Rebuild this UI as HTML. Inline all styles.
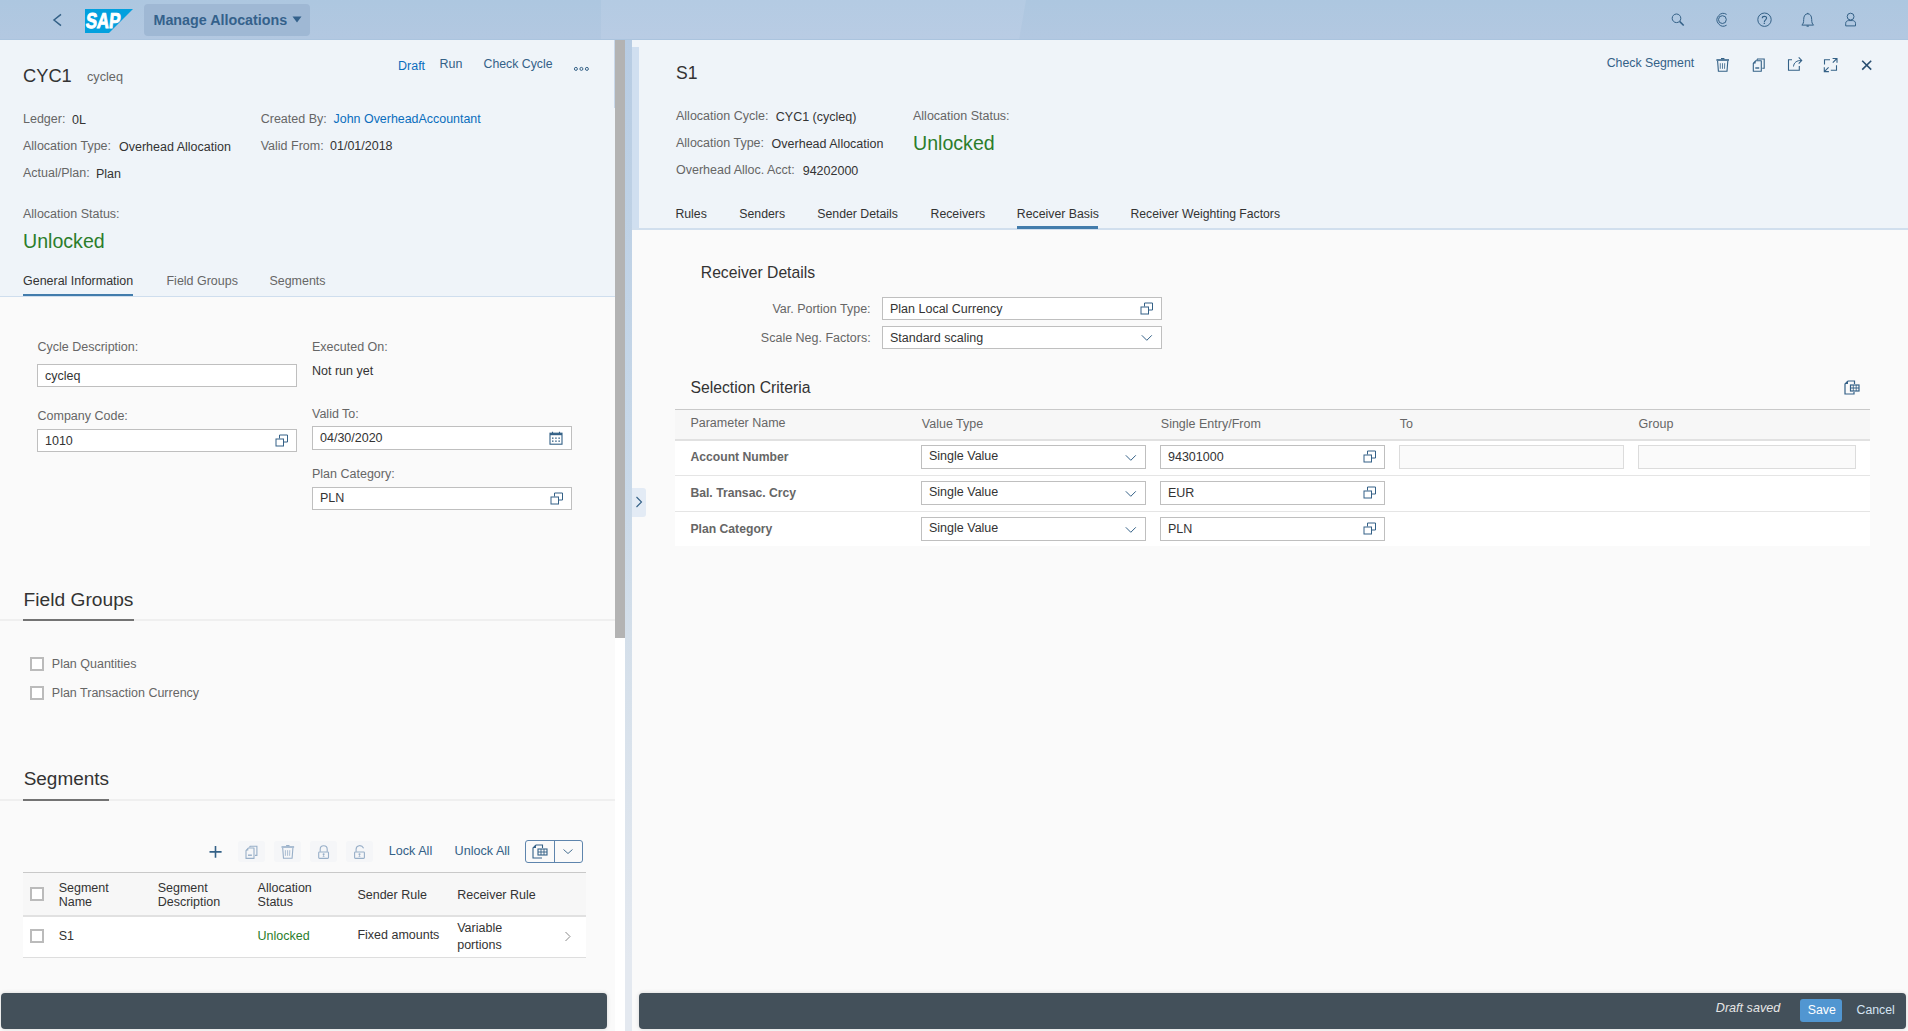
<!DOCTYPE html>
<html><head><meta charset="utf-8"><title>Manage Allocations</title>
<style>
html,body{margin:0;padding:0;}
body{width:1908px;height:1031px;overflow:hidden;position:relative;background:#fafafa;font-family:"Liberation Sans", sans-serif;}
</style></head><body>
<div style="position:absolute;left:0px;top:0px;width:1908px;height:40px;background:linear-gradient(#adc7e0,#b3c8e1);"></div>
<svg style="position:absolute;left:0;top:0" width="1908" height="40"><defs><linearGradient id="shg" x1="0" y1="0" x2="0" y2="1"><stop offset="0" stop-color="#b4cbe3"/><stop offset="1" stop-color="#b9cce4"/></linearGradient></defs><polygon points="601,0 1026,0 1019,40 601,40" fill="url(#shg)"/><rect x="0" y="39" width="1908" height="1" fill="#abc4de"/></svg>
<svg style="position:absolute;left:48px;top:10px;overflow:visible" width="18" height="20" viewBox="48 10 18 20"><path d="M61 14.4 L54 20 L61 25.6" fill="none" stroke="#346187" stroke-width="1.5"/></svg>
<svg style="position:absolute;left:85px;top:9px" width="48" height="24" viewBox="0 0 48 24"><polygon points="0,0 48,0 24,24 0,24" fill="#02a0de"/><text x="0.8" y="19.4" font-family="Liberation Sans" font-weight="bold" font-size="21.5" fill="#fff" stroke="#fff" stroke-width="0.9" textLength="34.5" lengthAdjust="spacingAndGlyphs" transform="skewX(-6) translate(1.5 0)">SAP</text></svg>
<div style="position:absolute;left:144px;top:4px;width:166px;height:32px;background:#9fb8d4;border-radius:4px;"></div>
<div style="position:absolute;left:153.5px;top:11.24px;font-size:14.3px;line-height:18px;color:#34618b;font-weight:bold;white-space:nowrap;">Manage Allocations</div>
<svg style="position:absolute;left:292px;top:16px" width="10" height="7" viewBox="0 0 10 7"><polygon points="0.5,0.5 9.5,0.5 5,6.5" fill="#34618b"/></svg>
<svg style="position:absolute;left:1665px;top:8px;overflow:visible" width="25" height="24" viewBox="1665 8 25 24"><circle cx="1676.5" cy="18.3" r="4.3" fill="none" stroke="#346187" stroke-width="1"/><path d="M1679.6 21.4 L1683.7 25.5" stroke="#346187" stroke-width="1.5"/></svg>
<svg style="position:absolute;left:1710px;top:8px;overflow:visible" width="22" height="24" viewBox="1710 8 22 24"><circle cx="1722.4" cy="19.6" r="3.9" fill="none" stroke="#346187" stroke-width="1"/><path d="M1726.6 14.4 A6.3 6.3 0 1 0 1726.6 25.2" fill="none" stroke="#346187" stroke-width="1"/></svg>
<svg style="position:absolute;left:1752px;top:8px;overflow:visible" width="26" height="24" viewBox="1752 8 26 24"><circle cx="1764.5" cy="19.7" r="6.7" fill="none" stroke="#346187" stroke-width="1"/><path d="M1762.3 18.2 C1762.3 15.8 1766.6 15.8 1766.6 18.1 C1766.6 19.8 1764.3 19.9 1764.3 22.2" fill="none" stroke="#346187" stroke-width="1.1"/><circle cx="1764.3" cy="23.4" r="0.7" fill="#346187"/></svg>
<svg style="position:absolute;left:1798px;top:8px;overflow:visible" width="20" height="24" viewBox="1798 8 20 24"><path d="M1801.8 25.1 C1803.2 24 1803.7 22.5 1803.7 19.5 C1803.7 15.8 1805.3 13.8 1807.7 13.8 C1810.1 13.8 1811.7 15.8 1811.7 19.5 C1811.7 22.5 1812.2 24 1813.6 25.1 Z" fill="none" stroke="#346187" stroke-width="1" stroke-linejoin="round"/><path d="M1806.6 26.1 L1808.8 26.1" stroke="#346187" stroke-width="1.2"/><path d="M1807 13.4 L1808.4 13.4" stroke="#346187" stroke-width="1"/></svg>
<svg style="position:absolute;left:1842px;top:8px;overflow:visible" width="18" height="24" viewBox="1842 8 18 24"><circle cx="1850.6" cy="16.6" r="3.4" fill="none" stroke="#346187" stroke-width="1"/><path d="M1845.7 25.9 L1845.7 23.3 C1845.7 21.6 1847 20.6 1848.6 20.6 L1852.6 20.6 C1854.2 20.6 1855.5 21.6 1855.5 23.3 L1855.5 25.9 Z" fill="none" stroke="#346187" stroke-width="1"/></svg>
<div style="position:absolute;left:0px;top:40px;width:615px;height:256px;background:#eff4f9;"></div>
<div style="position:absolute;left:0px;top:296px;width:615px;height:1px;background:#cfdeee;"></div>
<div style="position:absolute;left:0px;top:297px;width:615px;height:734px;background:#fafafa;"></div>
<div style="position:absolute;left:23px;top:64.16px;font-size:18.3px;line-height:23px;color:#333;font-weight:normal;white-space:nowrap;">CYC1</div>
<div style="position:absolute;left:87px;top:68.70px;font-size:12.7px;line-height:16px;color:#666;font-weight:normal;white-space:nowrap;">cycleq</div>
<div style="position:absolute;left:398px;top:57.67px;font-size:12.5px;line-height:16px;color:#0a6ebd;font-weight:normal;white-space:nowrap;">Draft</div>
<div style="position:absolute;left:439.5px;top:55.67px;font-size:12.5px;line-height:16px;color:#346187;font-weight:normal;white-space:nowrap;">Run</div>
<div style="position:absolute;left:483.5px;top:57.04px;font-size:12.3px;line-height:15px;color:#346187;font-weight:normal;white-space:nowrap;">Check Cycle</div>
<svg style="position:absolute;left:570px;top:62px;overflow:visible" width="24" height="14" viewBox="570 62 24 14"><circle cx="575.9" cy="68.9" r="1.5" fill="none" stroke="#346187" stroke-width="1"/><circle cx="581.4" cy="68.9" r="1.5" fill="none" stroke="#346187" stroke-width="1"/><circle cx="586.9" cy="68.9" r="1.5" fill="none" stroke="#346187" stroke-width="1"/></svg>
<div style="position:absolute;left:23px;top:110.67px;font-size:12.5px;line-height:16px;color:#666;font-weight:normal;white-space:nowrap;">Ledger:</div>
<div style="position:absolute;left:72px;top:111.87px;font-size:12.5px;line-height:16px;color:#333;font-weight:normal;white-space:nowrap;">0L</div>
<div style="position:absolute;left:23px;top:137.87px;font-size:12.5px;line-height:16px;color:#666;font-weight:normal;white-space:nowrap;">Allocation Type:</div>
<div style="position:absolute;left:119px;top:138.87px;font-size:12.5px;line-height:16px;color:#333;font-weight:normal;white-space:nowrap;">Overhead Allocation</div>
<div style="position:absolute;left:23px;top:164.97px;font-size:12.5px;line-height:16px;color:#666;font-weight:normal;white-space:nowrap;">Actual/Plan:</div>
<div style="position:absolute;left:96px;top:166.17px;font-size:12.5px;line-height:16px;color:#333;font-weight:normal;white-space:nowrap;">Plan</div>
<div style="position:absolute;left:260.7px;top:111.07px;font-size:12.5px;line-height:16px;color:#666;font-weight:normal;white-space:nowrap;">Created By:</div>
<div style="position:absolute;left:333.6px;top:111.09px;font-size:12.43px;line-height:16px;color:#0a6ebd;font-weight:normal;white-space:nowrap;">John OverheadAccountant</div>
<div style="position:absolute;left:260.7px;top:138.17px;font-size:12.5px;line-height:16px;color:#666;font-weight:normal;white-space:nowrap;">Valid From:</div>
<div style="position:absolute;left:330px;top:138.47px;font-size:12.5px;line-height:16px;color:#333;font-weight:normal;white-space:nowrap;">01/01/2018</div>
<div style="position:absolute;left:23px;top:205.67px;font-size:12.5px;line-height:16px;color:#666;font-weight:normal;white-space:nowrap;">Allocation Status:</div>
<div style="position:absolute;left:23px;top:229.20px;font-size:19.6px;line-height:24px;color:#2b7d2b;font-weight:normal;white-space:nowrap;">Unlocked</div>
<div style="position:absolute;left:23px;top:272.67px;font-size:12.48px;line-height:16px;color:#333;font-weight:normal;white-space:nowrap;">General Information</div>
<div style="position:absolute;left:166.5px;top:272.67px;font-size:12.48px;line-height:16px;color:#666;font-weight:normal;white-space:nowrap;">Field Groups</div>
<div style="position:absolute;left:269.4px;top:272.67px;font-size:12.48px;line-height:16px;color:#666;font-weight:normal;white-space:nowrap;">Segments</div>
<div style="position:absolute;left:23px;top:294px;width:110px;height:2px;background:#427cac;"></div>
<div style="position:absolute;left:37.5px;top:338.97px;font-size:12.5px;line-height:16px;color:#666;font-weight:normal;white-space:nowrap;">Cycle Description:</div>
<div style="position:absolute;left:37px;top:364px;width:260px;height:23px;box-sizing:border-box;background:#fff;border:1px solid #bfbfbf;"></div>
<div style="position:absolute;left:45px;top:367.67px;font-size:12.5px;line-height:16px;color:#333;font-weight:normal;white-space:nowrap;">cycleq</div>
<div style="position:absolute;left:37.5px;top:408.07px;font-size:12.5px;line-height:16px;color:#666;font-weight:normal;white-space:nowrap;">Company Code:</div>
<div style="position:absolute;left:37px;top:429px;width:260px;height:23px;box-sizing:border-box;background:#fff;border:1px solid #bfbfbf;"></div>
<div style="position:absolute;left:45px;top:432.67px;font-size:12.5px;line-height:16px;color:#333;font-weight:normal;white-space:nowrap;">1010</div>
<svg style="position:absolute;left:275px;top:434px" width="14" height="13" viewBox="0 0 14 13"><path d="M4.5 4.5 L4.5 1 L12.5 1 L12.5 8 L9 8" fill="none" stroke="#346187" stroke-width="1"/><rect x="1" y="5" width="7.5" height="7" fill="none" stroke="#346187" stroke-width="1"/></svg>
<div style="position:absolute;left:312px;top:338.87px;font-size:12.5px;line-height:16px;color:#666;font-weight:normal;white-space:nowrap;">Executed On:</div>
<div style="position:absolute;left:312px;top:363.07px;font-size:12.5px;line-height:16px;color:#333;font-weight:normal;white-space:nowrap;">Not run yet</div>
<div style="position:absolute;left:312px;top:405.67px;font-size:12.5px;line-height:16px;color:#666;font-weight:normal;white-space:nowrap;">Valid To:</div>
<div style="position:absolute;left:312px;top:426px;width:260px;height:24px;box-sizing:border-box;background:#fff;border:1px solid #bfbfbf;"></div>
<div style="position:absolute;left:320px;top:429.67px;font-size:12.5px;line-height:16px;color:#333;font-weight:normal;white-space:nowrap;">04/30/2020</div>
<svg style="position:absolute;left:549px;top:431px" width="14" height="14" viewBox="0 0 14 14"><rect x="1" y="2.2" width="12" height="11" fill="none" stroke="#346187" stroke-width="1.1"/><rect x="1" y="2.2" width="12" height="2" fill="#346187"/><path d="M3.5 0.8 L3.5 3 M10.5 0.8 L10.5 3" stroke="#346187" stroke-width="1.1"/><g fill="#346187"><rect x="3" y="6.5" width="1.5" height="1.3"/><rect x="6.2" y="6.5" width="1.5" height="1.3"/><rect x="9.4" y="6.5" width="1.5" height="1.3"/><rect x="3" y="9.5" width="1.5" height="1.3"/><rect x="6.2" y="9.5" width="1.5" height="1.3"/><rect x="9.4" y="9.5" width="1.5" height="1.3"/></g></svg>
<div style="position:absolute;left:312px;top:465.67px;font-size:12.5px;line-height:16px;color:#666;font-weight:normal;white-space:nowrap;">Plan Category:</div>
<div style="position:absolute;left:312px;top:487px;width:260px;height:23px;box-sizing:border-box;background:#fff;border:1px solid #bfbfbf;"></div>
<div style="position:absolute;left:320px;top:489.67px;font-size:12.5px;line-height:16px;color:#333;font-weight:normal;white-space:nowrap;">PLN</div>
<svg style="position:absolute;left:550px;top:492px" width="14" height="13" viewBox="0 0 14 13"><path d="M4.5 4.5 L4.5 1 L12.5 1 L12.5 8 L9 8" fill="none" stroke="#346187" stroke-width="1"/><rect x="1" y="5" width="7.5" height="7" fill="none" stroke="#346187" stroke-width="1"/></svg>
<div style="position:absolute;left:23.6px;top:587.54px;font-size:19.2px;line-height:24px;color:#333;font-weight:normal;white-space:nowrap;">Field Groups</div>
<div style="position:absolute;left:0px;top:619px;width:615px;height:2px;background:#efefef;"></div>
<div style="position:absolute;left:23px;top:619px;width:111px;height:2px;background:#737373;"></div>
<div style="position:absolute;left:30px;top:657px;width:14px;height:14px;box-sizing:border-box;background:#fff;border:2px solid #bbbbbb;"></div>
<div style="position:absolute;left:51.8px;top:656.07px;font-size:12.5px;line-height:16px;color:#666;font-weight:normal;white-space:nowrap;">Plan Quantities</div>
<div style="position:absolute;left:30px;top:686px;width:14px;height:14px;box-sizing:border-box;background:#fff;border:2px solid #bbbbbb;"></div>
<div style="position:absolute;left:51.8px;top:685.07px;font-size:12.5px;line-height:16px;color:#666;font-weight:normal;white-space:nowrap;">Plan Transaction Currency</div>
<div style="position:absolute;left:23.7px;top:767.22px;font-size:18.97px;line-height:24px;color:#333;font-weight:normal;white-space:nowrap;">Segments</div>
<div style="position:absolute;left:0px;top:799px;width:615px;height:2px;background:#efefef;"></div>
<div style="position:absolute;left:23px;top:799px;width:86px;height:2px;background:#737373;"></div>
<svg style="position:absolute;left:205px;top:842px;overflow:visible" width="21" height="20" viewBox="205 842 21 20"><path d="M215.5 846 L215.5 857.8 M209.5 851.9 L221.6 851.9" stroke="#346187" stroke-width="1.6"/></svg>
<div style="position:absolute;left:238px;top:841px;width:27px;height:21px;background:#f5f6f8;border-radius:3px;"></div>
<div style="position:absolute;left:274px;top:841px;width:27px;height:21px;background:#f5f6f8;border-radius:3px;"></div>
<div style="position:absolute;left:310px;top:841px;width:27px;height:21px;background:#f5f6f8;border-radius:3px;"></div>
<div style="position:absolute;left:346px;top:841px;width:27px;height:21px;background:#f5f6f8;border-radius:3px;"></div>
<svg style="position:absolute;left:240px;top:842px;overflow:visible" width="22" height="20" viewBox="240 842 22 20"><g transform="translate(-1507.3 787.2)"><path d="M1756.8 60.2 L1757.5 59 L1764.2 59 L1764.2 68.2 L1762.3 68.2" fill="none" stroke="#98afc8" stroke-width="1.1"/><path d="M1755.6 60.8 L1761.3 60.8 L1761.3 71.2 L1753.3 71.2 L1753.3 63.4 Z" fill="none" stroke="#98afc8" stroke-width="1.1" stroke-linejoin="round"/><path d="M1753.3 63.4 L1755.6 63.4 L1755.6 60.8 Z" fill="#98afc8"/><path d="M1755.3 68 L1759.2 68" stroke="#98afc8" stroke-width="1.4"/></g></svg>
<svg style="position:absolute;left:276px;top:842px;overflow:visible" width="22" height="20" viewBox="276 842 22 20"><g transform="translate(-1434.9 787)"><path d="M1716.4 60 L1729 60" stroke="#98afc8" stroke-width="1.6"/><path d="M1721 58.6 L1724.4 58.6" stroke="#98afc8" stroke-width="1.2"/><path d="M1717.6 61 L1718.4 71.3 L1727 71.3 L1727.8 61" fill="none" stroke="#98afc8" stroke-width="1.1"/><path d="M1720.3 63.2 L1720.3 68.8 M1722.5 63.2 L1722.5 68.8 M1724.7 63.2 L1724.5 68.8" stroke="#98afc8" stroke-width="0.8"/></g></svg>
<svg style="position:absolute;left:312px;top:842px;overflow:visible" width="24" height="20" viewBox="312 842 24 20"><rect x="318.70000000000005" y="852" width="9.8" height="6.4" rx="0.8" fill="none" stroke="#98afc8" stroke-width="1.1"/><circle cx="323.6" cy="854.2" r="1" fill="#98afc8"/><path d="M322.5 856.8 L324.70000000000005 856.8 L323.6 855 Z" fill="#98afc8"/><path d="M320.2 851.8 L320.2 849.2 C320.2 844.6 327.2 844.6 327.2 849.2 L327.2 851.8" fill="none" stroke="#98afc8" stroke-width="1.1"/></svg>
<svg style="position:absolute;left:348px;top:842px;overflow:visible" width="24" height="20" viewBox="348 842 24 20"><rect x="354.6" y="852" width="9.8" height="6.4" rx="0.8" fill="none" stroke="#98afc8" stroke-width="1.1"/><circle cx="359.5" cy="854.2" r="1" fill="#98afc8"/><path d="M358.4 856.8 L360.6 856.8 L359.5 855 Z" fill="#98afc8"/><path d="M356.1 851.8 L356.1 849.2 C356.1 845.2 361.5 844.2 363.6 848.2" fill="none" stroke="#98afc8" stroke-width="1.1"/></svg>
<div style="position:absolute;left:388.8px;top:842.83px;font-size:12.6px;line-height:16px;color:#346187;font-weight:normal;white-space:nowrap;">Lock All</div>
<div style="position:absolute;left:454.6px;top:842.83px;font-size:12.6px;line-height:16px;color:#346187;font-weight:normal;white-space:nowrap;">Unlock All</div>
<div style="position:absolute;left:525px;top:840px;width:58px;height:23px;box-sizing:border-box;border:1px solid #5e85ad;border-radius:3px;"></div>
<div style="position:absolute;left:554px;top:840px;width:1px;height:23px;background:#5e85ad;"></div>
<svg style="position:absolute;left:532px;top:844px" width="16" height="15" viewBox="0 0 16 15"><path d="M4 1 L10.5 1 L10.5 4 M4 1 L1 4 L1 14 L10 14" fill="none" stroke="#346187" stroke-width="1.1"/><path d="M1 4 L4 4 L4 1 Z" fill="#346187"/><rect x="6" y="5" width="9" height="6" fill="none" stroke="#346187" stroke-width="1.1"/><path d="M6 8 L15 8 M9 5 L9 11 M12 5 L12 11" stroke="#346187" stroke-width="0.9"/></svg>
<svg style="position:absolute;left:562px;top:848px" width="12" height="8" viewBox="0 0 12 8"><path d="M1.5 1.5 L6 5.5 L10.5 1.5" fill="none" stroke="#346187" stroke-width="0.9"/></svg>
<div style="position:absolute;left:23px;top:872px;width:563px;height:1px;background:#c9c9c9;"></div>
<div style="position:absolute;left:23px;top:873px;width:563px;height:42px;background:#f7f7f7;"></div>
<div style="position:absolute;left:23px;top:915px;width:563px;height:2px;background:#e1e1e1;"></div>
<div style="position:absolute;left:23px;top:917px;width:563px;height:40px;background:#fff;"></div>
<div style="position:absolute;left:23px;top:957px;width:563px;height:1px;background:#dedede;"></div>
<div style="position:absolute;left:30px;top:887px;width:14px;height:14px;box-sizing:border-box;background:#fff;border:2px solid #bbbbbb;"></div>
<div style="position:absolute;left:58.7px;top:880.27px;font-size:12.5px;line-height:16px;color:#333;font-weight:normal;white-space:nowrap;">Segment</div>
<div style="position:absolute;left:58.7px;top:893.67px;font-size:12.5px;line-height:16px;color:#333;font-weight:normal;white-space:nowrap;">Name</div>
<div style="position:absolute;left:157.7px;top:880.27px;font-size:12.5px;line-height:16px;color:#333;font-weight:normal;white-space:nowrap;">Segment</div>
<div style="position:absolute;left:157.7px;top:893.67px;font-size:12.5px;line-height:16px;color:#333;font-weight:normal;white-space:nowrap;">Description</div>
<div style="position:absolute;left:257.6px;top:880.27px;font-size:12.5px;line-height:16px;color:#333;font-weight:normal;white-space:nowrap;">Allocation</div>
<div style="position:absolute;left:257.6px;top:893.67px;font-size:12.5px;line-height:16px;color:#333;font-weight:normal;white-space:nowrap;">Status</div>
<div style="position:absolute;left:357.4px;top:887.17px;font-size:12.5px;line-height:16px;color:#333;font-weight:normal;white-space:nowrap;">Sender Rule</div>
<div style="position:absolute;left:457.2px;top:887.17px;font-size:12.5px;line-height:16px;color:#333;font-weight:normal;white-space:nowrap;">Receiver Rule</div>
<div style="position:absolute;left:30px;top:929px;width:14px;height:14px;box-sizing:border-box;background:#fff;border:2px solid #bbbbbb;"></div>
<div style="position:absolute;left:58.7px;top:927.67px;font-size:12.5px;line-height:16px;color:#333;font-weight:normal;white-space:nowrap;">S1</div>
<div style="position:absolute;left:257.6px;top:927.67px;font-size:12.5px;line-height:16px;color:#2b7d2b;font-weight:normal;white-space:nowrap;">Unlocked</div>
<div style="position:absolute;left:357.4px;top:927.27px;font-size:12.5px;line-height:16px;color:#333;font-weight:normal;white-space:nowrap;">Fixed amounts</div>
<div style="position:absolute;left:457.2px;top:920.17px;font-size:12.5px;line-height:16px;color:#333;font-weight:normal;white-space:nowrap;">Variable</div>
<div style="position:absolute;left:457.2px;top:936.67px;font-size:12.5px;line-height:16px;color:#333;font-weight:normal;white-space:nowrap;">portions</div>
<svg style="position:absolute;left:564px;top:931px" width="8" height="11" viewBox="0 0 8 11"><path d="M1.5 1 L6 5.5 L1.5 10" fill="none" stroke="#8a8a8a" stroke-width="1"/></svg>
<div style="position:absolute;left:1px;top:993px;width:606px;height:36px;background:#43505a;border-radius:4px;box-shadow:0 0 4px rgba(0,0,0,0.15);"></div>
<div style="position:absolute;left:615px;top:40px;width:10px;height:598px;background:#b3b3b3;"></div>
<div style="position:absolute;left:614px;top:40px;width:1px;height:68px;background:#c9d8ea;"></div>
<div style="position:absolute;left:615px;top:638px;width:10px;height:393px;background:#fff;"></div>
<div style="position:absolute;left:625px;top:40px;width:7px;height:991px;background:linear-gradient(#b7cce3,#c9d9e9 46%,#d4dfea 60%,#e4e9f0 93%);"></div>
<div style="position:absolute;left:632px;top:40px;width:1276px;height:189px;background:#eff4f9;"></div>
<div style="position:absolute;left:632px;top:47px;width:7px;height:181px;background:#d0dff0;"></div>
<div style="position:absolute;left:632px;top:228px;width:1276px;height:2px;background:#d1dfee;"></div>
<div style="position:absolute;left:632px;top:230px;width:1276px;height:801px;background:#fafafa;"></div>
<div style="position:absolute;left:632px;top:488px;width:14px;height:29px;background:#e3ebf5;border-radius:0 3px 3px 0;"></div>
<svg style="position:absolute;left:635px;top:496px" width="9" height="12" viewBox="0 0 9 12"><path d="M1.5 1 L6.5 6 L1.5 11" fill="none" stroke="#346187" stroke-width="1.1"/></svg>
<div style="position:absolute;left:676px;top:61.90px;font-size:17.6px;line-height:22px;color:#333;font-weight:normal;white-space:nowrap;">S1</div>
<div style="position:absolute;left:1606.7px;top:56.44px;font-size:12.3px;line-height:15px;color:#346187;font-weight:normal;white-space:nowrap;">Check Segment</div>
<svg style="position:absolute;left:1712px;top:54px;overflow:visible" width="20" height="22" viewBox="1712 54 20 22"><path d="M1716.4 60 L1729 60" stroke="#346187" stroke-width="1.6"/><path d="M1721 58.6 L1724.4 58.6" stroke="#346187" stroke-width="1.2"/><path d="M1717.6 61 L1718.4 71.3 L1727 71.3 L1727.8 61" fill="none" stroke="#346187" stroke-width="1.1"/><path d="M1720.3 63.2 L1720.3 68.8 M1722.5 63.2 L1722.5 68.8 M1724.7 63.2 L1724.5 68.8" stroke="#346187" stroke-width="0.8"/></svg>
<svg style="position:absolute;left:1748px;top:54px;overflow:visible" width="20" height="22" viewBox="1748 54 20 22"><path d="M1756.8 60.2 L1757.5 59 L1764.2 59 L1764.2 68.2 L1762.3 68.2" fill="none" stroke="#346187" stroke-width="1.1"/><path d="M1755.6 60.8 L1761.3 60.8 L1761.3 71.2 L1753.3 71.2 L1753.3 63.4 Z" fill="none" stroke="#346187" stroke-width="1.1" stroke-linejoin="round"/><path d="M1753.3 63.4 L1755.6 63.4 L1755.6 60.8 Z" fill="#346187"/><path d="M1755.3 68 L1759.2 68" stroke="#346187" stroke-width="1.4"/></svg>
<svg style="position:absolute;left:1784px;top:54px;overflow:visible" width="22" height="22" viewBox="1784 54 22 22"><path d="M1792 59.7 L1788.5 59.7 L1788.5 70.2 L1799.3 70.2 L1799.3 66" fill="none" stroke="#346187" stroke-width="1.1"/><path d="M1793.5 66.5 C1793.8 62.6 1796.8 60.4 1801.3 60.4" fill="none" stroke="#346187" stroke-width="1"/><path d="M1798.7 57.4 L1801.7 60.4 L1798.7 63.6" fill="none" stroke="#346187" stroke-width="1.1"/></svg>
<svg style="position:absolute;left:1820px;top:54px;overflow:visible" width="22" height="22" viewBox="1820 54 22 22"><path d="M1824.5 64.6 L1824.5 59.7 L1830 59.7 M1836.5 65.3 L1836.5 70.3 L1830.8 70.3" fill="none" stroke="#346187" stroke-width="1.1"/><path d="M1832.8 62.6 L1836.9 58.5 M1832.6 58.5 L1837 58.5 L1837 62.8 M1828.6 67.4 L1824.3 71.6 M1824.3 67.3 L1824.3 71.6 L1828.9 71.6" fill="none" stroke="#346187" stroke-width="1.1"/></svg>
<svg style="position:absolute;left:1858px;top:56px;overflow:visible" width="18" height="18" viewBox="1858 56 18 18"><path d="M1862.2 60.8 L1871.2 69.6 M1871.2 60.8 L1862.2 69.6" stroke="#2a4f72" stroke-width="1.6"/></svg>
<div style="position:absolute;left:676px;top:107.87px;font-size:12.5px;line-height:16px;color:#666;font-weight:normal;white-space:nowrap;">Allocation Cycle:</div>
<div style="position:absolute;left:775.8px;top:108.87px;font-size:12.5px;line-height:16px;color:#333;font-weight:normal;white-space:nowrap;">CYC1 (cycleq)</div>
<div style="position:absolute;left:676px;top:134.87px;font-size:12.5px;line-height:16px;color:#666;font-weight:normal;white-space:nowrap;">Allocation Type:</div>
<div style="position:absolute;left:771.6px;top:135.97px;font-size:12.5px;line-height:16px;color:#333;font-weight:normal;white-space:nowrap;">Overhead Allocation</div>
<div style="position:absolute;left:676px;top:161.87px;font-size:12.5px;line-height:16px;color:#666;font-weight:normal;white-space:nowrap;">Overhead Alloc. Acct:</div>
<div style="position:absolute;left:802.7px;top:162.97px;font-size:12.5px;line-height:16px;color:#333;font-weight:normal;white-space:nowrap;">94202000</div>
<div style="position:absolute;left:913px;top:107.87px;font-size:12.5px;line-height:16px;color:#666;font-weight:normal;white-space:nowrap;">Allocation Status:</div>
<div style="position:absolute;left:913px;top:130.60px;font-size:19.6px;line-height:24px;color:#2b7d2b;font-weight:normal;white-space:nowrap;">Unlocked</div>
<div style="position:absolute;left:675.4px;top:206.94px;font-size:12.3px;line-height:15px;color:#333;font-weight:normal;white-space:nowrap;">Rules</div>
<div style="position:absolute;left:739.3px;top:206.94px;font-size:12.3px;line-height:15px;color:#333;font-weight:normal;white-space:nowrap;">Senders</div>
<div style="position:absolute;left:817.3px;top:206.94px;font-size:12.3px;line-height:15px;color:#333;font-weight:normal;white-space:nowrap;">Sender Details</div>
<div style="position:absolute;left:930.5px;top:206.94px;font-size:12.3px;line-height:15px;color:#333;font-weight:normal;white-space:nowrap;">Receivers</div>
<div style="position:absolute;left:1016.8px;top:206.94px;font-size:12.3px;line-height:15px;color:#333;font-weight:normal;white-space:nowrap;">Receiver Basis</div>
<div style="position:absolute;left:1130.5px;top:206.97px;font-size:12.2px;line-height:15px;color:#333;font-weight:normal;white-space:nowrap;">Receiver Weighting Factors</div>
<div style="position:absolute;left:1017px;top:226px;width:81px;height:3px;background:#427cac;"></div>
<div style="position:absolute;left:700.8px;top:263.46px;font-size:15.7px;line-height:20px;color:#333;font-weight:normal;white-space:nowrap;">Receiver Details</div>
<div style="position:absolute;right:1037.4px;top:301.07px;font-size:12.5px;line-height:16px;color:#666;font-weight:normal;white-space:nowrap;">Var. Portion Type:</div>
<div style="position:absolute;left:882px;top:297px;width:280px;height:23px;box-sizing:border-box;background:#fff;border:1px solid #bfbfbf;"></div>
<div style="position:absolute;left:890px;top:301.07px;font-size:12.5px;line-height:16px;color:#333;font-weight:normal;white-space:nowrap;">Plan Local Currency</div>
<svg style="position:absolute;left:1140px;top:302px" width="14" height="13" viewBox="0 0 14 13"><path d="M4.5 4.5 L4.5 1 L12.5 1 L12.5 8 L9 8" fill="none" stroke="#346187" stroke-width="1"/><rect x="1" y="5" width="7.5" height="7" fill="none" stroke="#346187" stroke-width="1"/></svg>
<div style="position:absolute;right:1037.4px;top:329.97px;font-size:12.5px;line-height:16px;color:#666;font-weight:normal;white-space:nowrap;">Scale Neg. Factors:</div>
<div style="position:absolute;left:882px;top:326px;width:280px;height:23px;box-sizing:border-box;background:#fff;border:1px solid #bfbfbf;"></div>
<div style="position:absolute;left:890px;top:329.97px;font-size:12.5px;line-height:16px;color:#333;font-weight:normal;white-space:nowrap;">Standard scaling</div>
<svg style="position:absolute;left:1141px;top:334px" width="12" height="8" viewBox="0 0 12 8"><path d="M0.8 1.3 L5.8 6.3 L10.8 1.3" fill="none" stroke="#346187" stroke-width="1"/></svg>
<div style="position:absolute;left:690.4px;top:377.53px;font-size:15.77px;line-height:20px;color:#333;font-weight:normal;white-space:nowrap;">Selection Criteria</div>
<svg style="position:absolute;left:1844px;top:380px" width="17" height="16" viewBox="0 0 17 16"><path d="M4 1 L10.5 1 L10.5 4 M4 1 L1 4 L1 14 L10 14 L10 12" fill="none" stroke="#346187" stroke-width="1.2"/><path d="M1 4 L4 4 L4 1 Z" fill="#346187"/><rect x="6.5" y="5" width="8.5" height="6" fill="none" stroke="#346187" stroke-width="1.2"/><path d="M6.5 8 L15 8" stroke="#346187" stroke-width="1"/><path d="M9.3 5 L9.3 11 M12.2 5 L12.2 11" stroke="#346187" stroke-width="0.8"/></svg>
<div style="position:absolute;left:675px;top:409px;width:1195px;height:1px;background:#c9c9c9;"></div>
<div style="position:absolute;left:675px;top:410px;width:1195px;height:29px;background:#f7f7f7;"></div>
<div style="position:absolute;left:675px;top:439px;width:1195px;height:2px;background:#e1e1e1;"></div>
<div style="position:absolute;left:675px;top:441px;width:1195px;height:105px;background:#fff;"></div>
<div style="position:absolute;left:675px;top:475px;width:1195px;height:1px;background:#e5e5e5;"></div>
<div style="position:absolute;left:675px;top:511px;width:1195px;height:1px;background:#e5e5e5;"></div>
<div style="position:absolute;left:690.4px;top:415.27px;font-size:12.5px;line-height:16px;color:#666;font-weight:normal;white-space:nowrap;">Parameter Name</div>
<div style="position:absolute;left:921.8px;top:415.67px;font-size:12.5px;line-height:16px;color:#666;font-weight:normal;white-space:nowrap;">Value Type</div>
<div style="position:absolute;left:1160.8px;top:415.67px;font-size:12.5px;line-height:16px;color:#666;font-weight:normal;white-space:nowrap;">Single Entry/From</div>
<div style="position:absolute;left:1399.8px;top:415.67px;font-size:12.5px;line-height:16px;color:#666;font-weight:normal;white-space:nowrap;">To</div>
<div style="position:absolute;left:1638.6px;top:415.67px;font-size:12.5px;line-height:16px;color:#666;font-weight:normal;white-space:nowrap;">Group</div>
<div style="position:absolute;left:690.4px;top:449.67px;font-size:12.2px;line-height:15px;color:#666;font-weight:bold;white-space:nowrap;">Account Number</div>
<div style="position:absolute;left:921px;top:445px;width:225px;height:24px;box-sizing:border-box;background:#fff;border:1px solid #bfbfbf;"></div>
<div style="position:absolute;left:929px;top:448.47px;font-size:12.5px;line-height:16px;color:#333;font-weight:normal;white-space:nowrap;">Single Value</div>
<svg style="position:absolute;left:1125px;top:454px" width="12" height="8" viewBox="0 0 12 8"><path d="M0.8 1.3 L5.8 6.3 L10.8 1.3" fill="none" stroke="#346187" stroke-width="1"/></svg>
<div style="position:absolute;left:1160px;top:445px;width:225px;height:24px;box-sizing:border-box;background:#fff;border:1px solid #bfbfbf;"></div>
<div style="position:absolute;left:1168px;top:448.87px;font-size:12.5px;line-height:16px;color:#333;font-weight:normal;white-space:nowrap;">94301000</div>
<svg style="position:absolute;left:1363px;top:450px" width="14" height="13" viewBox="0 0 14 13"><path d="M4.5 4.5 L4.5 1 L12.5 1 L12.5 8 L9 8" fill="none" stroke="#346187" stroke-width="1"/><rect x="1" y="5" width="7.5" height="7" fill="none" stroke="#346187" stroke-width="1"/></svg>
<div style="position:absolute;left:690.4px;top:485.67px;font-size:12.2px;line-height:15px;color:#666;font-weight:bold;white-space:nowrap;">Bal. Transac. Crcy</div>
<div style="position:absolute;left:921px;top:481px;width:225px;height:24px;box-sizing:border-box;background:#fff;border:1px solid #bfbfbf;"></div>
<div style="position:absolute;left:929px;top:484.47px;font-size:12.5px;line-height:16px;color:#333;font-weight:normal;white-space:nowrap;">Single Value</div>
<svg style="position:absolute;left:1125px;top:490px" width="12" height="8" viewBox="0 0 12 8"><path d="M0.8 1.3 L5.8 6.3 L10.8 1.3" fill="none" stroke="#346187" stroke-width="1"/></svg>
<div style="position:absolute;left:1160px;top:481px;width:225px;height:24px;box-sizing:border-box;background:#fff;border:1px solid #bfbfbf;"></div>
<div style="position:absolute;left:1168px;top:484.87px;font-size:12.5px;line-height:16px;color:#333;font-weight:normal;white-space:nowrap;">EUR</div>
<svg style="position:absolute;left:1363px;top:486px" width="14" height="13" viewBox="0 0 14 13"><path d="M4.5 4.5 L4.5 1 L12.5 1 L12.5 8 L9 8" fill="none" stroke="#346187" stroke-width="1"/><rect x="1" y="5" width="7.5" height="7" fill="none" stroke="#346187" stroke-width="1"/></svg>
<div style="position:absolute;left:690.4px;top:521.67px;font-size:12.2px;line-height:15px;color:#666;font-weight:bold;white-space:nowrap;">Plan Category</div>
<div style="position:absolute;left:921px;top:517px;width:225px;height:24px;box-sizing:border-box;background:#fff;border:1px solid #bfbfbf;"></div>
<div style="position:absolute;left:929px;top:520.47px;font-size:12.5px;line-height:16px;color:#333;font-weight:normal;white-space:nowrap;">Single Value</div>
<svg style="position:absolute;left:1125px;top:526px" width="12" height="8" viewBox="0 0 12 8"><path d="M0.8 1.3 L5.8 6.3 L10.8 1.3" fill="none" stroke="#346187" stroke-width="1"/></svg>
<div style="position:absolute;left:1160px;top:517px;width:225px;height:24px;box-sizing:border-box;background:#fff;border:1px solid #bfbfbf;"></div>
<div style="position:absolute;left:1168px;top:520.87px;font-size:12.5px;line-height:16px;color:#333;font-weight:normal;white-space:nowrap;">PLN</div>
<svg style="position:absolute;left:1363px;top:522px" width="14" height="13" viewBox="0 0 14 13"><path d="M4.5 4.5 L4.5 1 L12.5 1 L12.5 8 L9 8" fill="none" stroke="#346187" stroke-width="1"/><rect x="1" y="5" width="7.5" height="7" fill="none" stroke="#346187" stroke-width="1"/></svg>
<div style="position:absolute;left:1399px;top:445px;width:225px;height:24px;box-sizing:border-box;background:#fafafa;border:1px solid #dcdcdc;"></div>
<div style="position:absolute;left:1638px;top:445px;width:218px;height:24px;box-sizing:border-box;background:#fafafa;border:1px solid #dcdcdc;"></div>
<div style="position:absolute;left:639px;top:993px;width:1267px;height:36px;background:#43505a;border-radius:4px;box-shadow:0 0 4px rgba(0,0,0,0.15);"></div>
<div style="position:absolute;left:1715.8px;top:1000.43px;font-size:12.6px;line-height:16px;color:#e6e6e6;font-weight:normal;white-space:nowrap;font-style:italic;">Draft saved</div>
<div style="position:absolute;left:1800px;top:999px;width:42px;height:23px;background:#5196d1;border-radius:3px;"></div>
<div style="position:absolute;left:1807.7px;top:1003.24px;font-size:12.3px;line-height:15px;color:#fff;font-weight:normal;white-space:nowrap;">Save</div>
<div style="position:absolute;left:1856.5px;top:1003.24px;font-size:12.3px;line-height:15px;color:#d5e4f3;font-weight:normal;white-space:nowrap;">Cancel</div>
</body></html>
